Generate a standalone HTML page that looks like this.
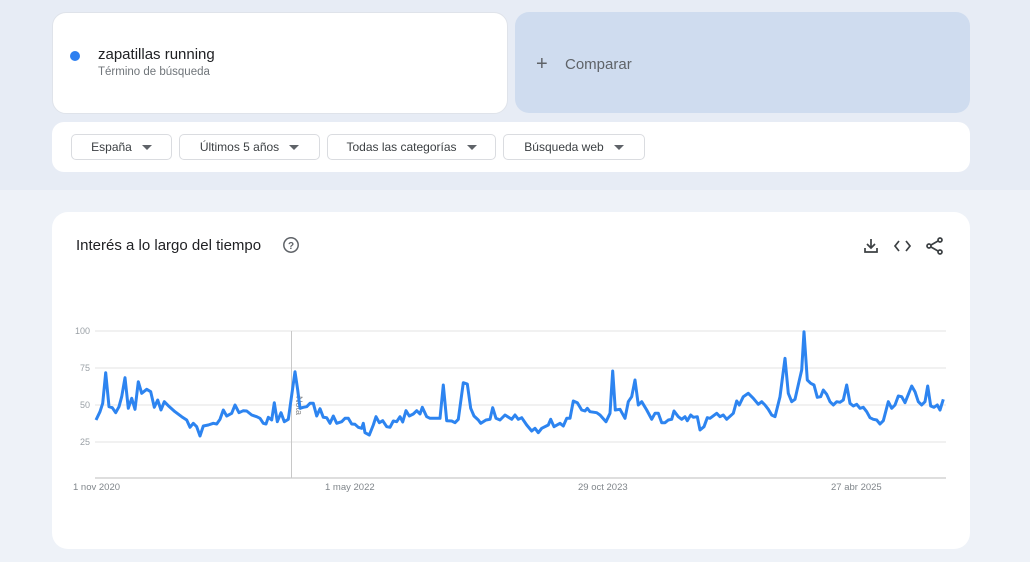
<!DOCTYPE html>
<html><head><meta charset="utf-8"><style>
*{margin:0;padding:0;box-sizing:border-box}
body{width:1030px;height:562px;overflow:hidden;background:#eef2f8;font-family:"Liberation Sans",Arial,sans-serif;position:relative}
.top{position:absolute;left:0;top:0;width:1030px;height:190px;background:#e7ecf5}
.card{position:absolute;background:#fff;border-radius:14px}
.btn{position:absolute;top:134px;height:26px;border:1px solid #dadce0;border-radius:5px;font-size:12px;color:#3c4043;display:flex;align-items:center;justify-content:center;gap:10px;background:#fff}
.tri{width:0;height:0;border-left:5px solid transparent;border-right:5px solid transparent;border-top:5px solid #5f6368}
.yl{position:absolute;left:60px;width:30px;text-align:right;font-size:9px;color:#9aa0a6}
.xl{position:absolute;top:482px;font-size:9.5px;color:#80868b}
</style></head><body>
<div class="top"></div>
<div class="card" style="left:52px;top:12px;width:456px;height:102px;border:1px solid #dfe3ea"></div>
<div style="position:absolute;left:70px;top:51px;width:10px;height:10px;border-radius:50%;background:#2d7ff0"></div>
<div style="position:absolute;left:98px;top:46px;font-size:15px;color:#202124">zapatillas running</div>
<div style="position:absolute;left:98px;top:66px;font-size:11.5px;color:#70757a">Término de búsqueda</div>
<div style="position:absolute;left:515px;top:12px;width:455px;height:101px;background:#cfdcef;border-radius:14px"></div>
<div style="position:absolute;left:536px;top:53px;font-size:20px;color:#5f6368;font-weight:300">+</div>
<div style="position:absolute;left:565px;top:56px;font-size:15px;color:#5f6368">Comparar</div>
<div class="card" style="left:52px;top:122px;width:918px;height:50px;border-radius:12px"></div>
<div class="btn" style="left:71px;width:101px">España<span class="tri"></span></div>
<div class="btn" style="left:179px;width:141px">Últimos 5 años<span class="tri"></span></div>
<div class="btn" style="left:327px;width:169px">Todas las categorías<span class="tri"></span></div>
<div class="btn" style="left:503px;width:142px">Búsqueda web<span class="tri"></span></div>
<div class="card" style="left:52px;top:212px;width:918px;height:337px;border-radius:16px"></div>
<div style="position:absolute;left:76px;top:237px;font-size:15px;color:#202124">Interés a lo largo del tiempo</div>
<svg style="position:absolute;left:282px;top:236px" width="18" height="18" viewBox="0 0 18 18"><circle cx="9" cy="9" r="7.2" fill="none" stroke="#5f6368" stroke-width="1.5"/><text x="9" y="13" font-size="10" text-anchor="middle" fill="#5f6368" font-family="Liberation Sans" font-weight="bold">?</text></svg>
<svg style="position:absolute;left:860px;top:236px" width="90" height="20" viewBox="0 0 90 20" fill="none" stroke="#3c4043" stroke-width="1.7">
<path d="M11 3v9M7 8l4 4 4-4M5 12v4h12v-4"/>
<path d="M39 5l-4 5 4 5M46 5l4 5-4 5"/>
<circle cx="80" cy="4" r="2"/><circle cx="69" cy="10" r="2"/><circle cx="80" cy="16" r="2"/><path d="M71 9l7-4M71 11l7 4"/>
</svg>
<svg style="position:absolute;left:0;top:0" width="1030" height="562">
<g stroke="#e3e3e3" stroke-width="1"><line x1="95" y1="331" x2="946" y2="331"/><line x1="95" y1="368" x2="946" y2="368"/><line x1="95" y1="405" x2="946" y2="405"/><line x1="95" y1="442" x2="946" y2="442"/></g>
<line x1="95" y1="478" x2="946" y2="478" stroke="#bdbdbd"/>
<line x1="291.5" y1="331" x2="291.5" y2="478" stroke="#c8c8c8"/>
<text x="0" y="0" transform="translate(296,396) rotate(90)" font-size="9" fill="#888" font-family="Liberation Sans">Nota</text>
<polyline fill="none" stroke="#2d84f0" stroke-width="3" stroke-linejoin="round" points="96,420 100,411.7 102.7,403.3 105.7,372.7 109,406.7 112.3,407.7 115.7,412.7 119,406.7 121.7,396.7 125,377.7 128.3,408.3 131.7,398.3 135,409.3 138.3,381.7 141.7,393.3 146.7,389.3 150.7,391.7 154.3,407.3 157.7,400 161,410 164.3,401.7 168.3,405.7 175,411.7 181.7,416.7 186.7,420 190,427.3 193.3,423.3 196.7,426.7 200,436 203.3,426 208.3,425 213.3,423.3 216.7,424 220,419.3 223.3,410 226.7,416 231.7,413.3 235,405 239,412.7 243.3,410.7 246.7,411 251.7,415 256.7,416.7 260,418.3 263.3,423.3 266,424 268.3,417.3 271.7,420 274.3,402.7 277.3,421.7 281,412.7 284.3,421.7 288.3,419.3 295,371.7 297.7,390 300,408.3 303.3,407.3 306.7,406.7 310,403.3 313.3,403.3 316.7,416 320,408.7 323.3,417.3 326.7,417.7 330,423.3 333.3,416 336.7,423.3 341.7,421.7 345,418.3 348.3,418.3 351.7,424 355,424.3 358.3,427.3 361.7,428.3 363.3,423.3 365,432.7 369.3,435 373.3,425 376,416.7 379.3,422.7 382.7,420.7 386.7,426.7 390,427.3 393.3,421 396.7,421.7 400,416.7 402.7,422 406,410.7 409.3,416 413.3,414 416.7,410.7 420,414 422.3,407.3 426.7,416.7 430,418.3 435,418.3 440,418.3 443.3,385 446.7,420.7 451.7,421 455,422.7 458.3,419.3 463.3,382.7 467.3,384 470.7,408.3 474,416 478.3,420 480.7,423.3 486,420 490,419.3 492.7,407.7 496,418.3 500,420 505,415 511.7,419.3 515,415 518.3,419.3 521.7,417.7 526.7,425 531.7,431 535,428.3 538.3,432.7 541.7,428.3 548.3,425 550.7,419.3 554,426.7 560,423.3 563.3,426 566.7,418.3 570,418.3 573.3,401 577.3,402.7 581.7,410 585,411 587.3,408.3 590,411.7 596.7,412.7 600,415 606,421.7 610,413.3 612.7,371 615.3,410 620,409.3 625,418.3 628.3,401.7 631.7,396.7 635,380 638.3,405 641.7,401.7 646.7,410 651.7,419.3 655,413.3 658.3,413.3 661.7,422.7 665,422.7 668.3,420 671.7,419.3 674,411 678.3,416.7 681.7,419.3 685,416.7 687.3,420.7 690.7,415 693.3,417.3 697.3,416.7 700,430 704,426.7 707.3,417.7 710,418.3 716.7,413.3 720,416.7 723.3,415 726.7,419.3 733.3,413.3 736.7,401 739.3,405 743.3,396.7 748.3,393.3 753.3,398.3 758.3,404.3 761.7,401.7 765,405 768.3,409.3 771.7,415 775,416.7 780,396.7 785,358.3 788.3,393.3 791.7,401.7 795,399.3 799,381.7 801.7,370 804,331.7 807.3,380 810.7,383.3 814,385 817.3,397.3 820.7,396.7 823.3,390 826.7,394.3 830,401.7 833.3,405 836.7,401.7 840,402.3 843.3,400 846.7,385 850,403.3 853.3,406 856.7,404.3 860,408.3 863.3,407.3 866.7,411.7 870,417.7 873.3,419.3 876.7,420 880,424 883.3,420.7 888.3,401.7 891.7,408.3 895,405 898.3,396 901.7,396.7 905,402.7 911.7,386 915,391.7 918.3,401.7 921.7,405 925,401.7 927.7,386 930.7,406 934,407.3 937.3,405 940,410 943.3,399.3"/>
</svg>
<div class="yl" style="top:326px">100</div>
<div class="yl" style="top:363px">75</div>
<div class="yl" style="top:400px">50</div>
<div class="yl" style="top:437px">25</div>
<div class="xl" style="left:73px">1 nov 2020</div>
<div class="xl" style="left:325px">1 may 2022</div>
<div class="xl" style="left:578px">29 oct 2023</div>
<div class="xl" style="left:831px">27 abr 2025</div>
</body></html>
